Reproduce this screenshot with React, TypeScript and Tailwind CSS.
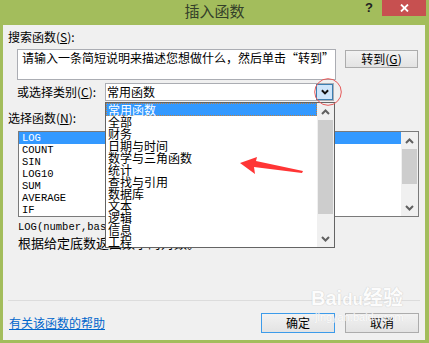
import React from "react";

const cjk = { fontFamily: '"Noto Sans CJK SC", "Noto Sans", sans-serif' };
const mono = { fontFamily: '"Liberation Mono", "DejaVu Sans Mono", monospace' };

function Chevron({ up, color = "#606060", w = 9, h = 6, sw = 2 }: { up?: boolean; color?: string; w?: number; h?: number; sw?: number }) {
  return (
    <svg width={w} height={h} viewBox="0 0 9 6">
      {up ? (
        <polyline points="1,5 4.5,1.5 8,5" fill="none" stroke={color} strokeWidth={sw} />
      ) : (
        <polyline points="1,1 4.5,4.5 8,1" fill="none" stroke={color} strokeWidth={sw} />
      )}
    </svg>
  );
}

const categories = [
  "常用函数",
  "全部",
  "财务",
  "日期与时间",
  "数学与三角函数",
  "统计",
  "查找与引用",
  "数据库",
  "文本",
  "逻辑",
  "信息",
  "工程",
];

const funcs = ["LOG", "COUNT", "SIN", "LOG10", "SUM", "AVERAGE", "IF"];

export default function App() {
  return (
    <div className="w-[429px] h-[343px] bg-[#a3bd5c] flex flex-col overflow-hidden text-black" style={cjk}>
      {/* title bar */}
      <div className="h-[25px] grid grid-cols-[1fr_auto_1fr] shrink-0">
        <div />
        <div className="text-[15px] leading-[22px] text-[#34402a]">插入函数</div>
        <div className="flex justify-end items-start">
          <span className="text-[13px] font-bold leading-[16px] mr-[9px] text-[#222]" style={{ fontFamily: '"Liberation Sans", sans-serif' }}>?</span>
          <div className="w-[44px] h-[16px] bg-[#c75050] mr-[3px] flex items-center justify-center">
            <svg width="9" height="8" viewBox="0 0 9 8">
              <path d="M1 0.5 L8 7.5 M8 0.5 L1 7.5" stroke="#fff" strokeWidth="1.8" fill="none" />
            </svg>
          </div>
        </div>
      </div>

      {/* body */}
      <div className="relative flex-1 ml-[3px] mr-[4px] mb-[3px] bg-[#f0f0f0] flex flex-col px-[5px]">
        <div className="mt-[4px] h-[16px] text-[12px] leading-[16px]">
          搜索函数(<span className="underline">S</span>):
        </div>

        <div className="mt-[4px] flex items-start ml-[9px]">
          <div className="w-[319px] h-[31px] bg-white border border-[#abadb3] pl-[4px] text-[12px] leading-[16px] whitespace-nowrap overflow-hidden">
            请输入一条简短说明来描述您想做什么，然后单击“转到”
          </div>
          <div className="ml-[9px] mt-[1px] w-[73px] h-[18px] border border-[#acacac] bg-gradient-to-b from-[#f2f2f2] to-[#e3e3e3] flex items-center justify-center text-[12px] leading-[16px]">
            转到(<span className="underline">G</span>)
          </div>
        </div>

        <div className="mt-[3px] flex items-center ml-[9px] h-[18px]">
          <div className="w-[88px] text-[12px] leading-[16px]">
            或选择类别(<span className="underline">C</span>):
          </div>
          <div className="w-[229px] h-[18px] bg-white border border-[#abadb3] flex items-center justify-between">
            <span className="pl-[1px] text-[12px] leading-[16px]">常用函数</span>
            <div className="w-[17px] h-[16px] bg-[#cfe6fb] border border-[#3c7fb1] flex items-center justify-center">
              <Chevron color="#111" w={8} h={6} sw={2.2} />
            </div>
          </div>
        </div>

        <div className="mt-[9px] h-[16px] text-[12px] leading-[16px]">
          选择函数(<span className="underline">N</span>):
        </div>

        <div className="mt-[5px] ml-[10px] w-[401px] h-[86px] bg-white border border-[#7a7a7a] flex">
          <div className="flex-1 flex flex-col">
            {funcs.map((f, i) => (
              <div
                key={f}
                className={`h-[12px] pl-[3px] text-[10.5px] leading-[12px] ${i === 0 ? "bg-[#3399ff] text-white" : "text-black"}`}
                style={mono}
              >
                {f}
              </div>
            ))}
          </div>
          <div className="w-[17px] bg-[#f0f0f0] flex flex-col">
            <div className="h-[17px] flex items-center justify-center">
              <Chevron up />
            </div>
            <div className="h-[35px] mx-[1px] bg-[#cdcdcd]" />
            <div className="flex-1" />
            <div className="h-[17px] flex items-center justify-center">
              <Chevron />
            </div>
          </div>
        </div>

        <div className="mt-[4px] ml-[10px] h-[12px] text-[10.5px] leading-[12px]" style={mono}>
          LOG(number,base)
        </div>
        <div className="mt-[2px] ml-[10px] h-[16px] text-[13px] leading-[16px]">根据给定底数返回数字的对数。</div>

        <div className="flex-1" />
        <div className="h-px bg-[#dcdcdc]" />

        <div className="mt-[12px] mb-[7px] h-[20px] flex items-center justify-between">
          <span className="ml-[1px] text-[12px] leading-[16px] text-[#0066cc] underline">有关该函数的帮助</span>
          <div className="flex gap-[10px] mr-[1px]">
            <div className="w-[74px] h-[20px] border border-[#3c9bea] bg-gradient-to-b from-[#f2f2f2] to-[#e3e3e3] flex items-center justify-center text-[12px] leading-[16px]">
              确定
            </div>
            <div className="w-[74px] h-[20px] border border-[#acacac] bg-gradient-to-b from-[#f2f2f2] to-[#e3e3e3] flex items-center justify-center text-[12px] leading-[16px]">
              取消
            </div>
          </div>
        </div>

        {/* watermark */}
        <div className="absolute left-[308px] top-[262px] pointer-events-none flex flex-col items-start opacity-80 whitespace-nowrap">
          <div
            className="text-[20px] font-bold leading-[22px] text-white whitespace-nowrap"
            style={{ fontFamily: '"Liberation Sans", "Noto Sans CJK SC", sans-serif', textShadow: "0 0 1px #c8c8c8, 0 0 1px #c8c8c8" }}
          >
            Bai<span className="text-[17px]">du</span>经验
          </div>
          <div className="ml-[4px] text-[11px] leading-[12px] text-white whitespace-nowrap" style={{ fontFamily: '"Liberation Sans", sans-serif', textShadow: "0 0 1px #d0d0d0" }}>
            jingyan.baidu.com
          </div>
        </div>

        {/* dropdown list overlay */}
        <div className="absolute left-[102px] top-[77px] w-[230px] h-[146px] bg-white border border-[#646464] flex">
          <div className="flex-1 flex flex-col">
            {categories.map((c, i) => (
              <div
                key={c}
                className={`h-[12px] text-[12px] leading-[12px] whitespace-nowrap ${
                  i === 0 ? "bg-[#3399ff] text-white border border-dotted border-[#c08040] pl-[1px] h-[13px] leading-[11px]" : "pl-[2px]"
                }`}
              >
                {c}
              </div>
            ))}
          </div>
          <div className="w-[17px] bg-[#f0f0f0] flex flex-col">
            <div className="h-[17px] flex items-center justify-center">
              <Chevron up />
            </div>
            <div className="h-[94px] mx-[1px] bg-[#cdcdcd]" />
            <div className="flex-1" />
            <div className="h-[17px] flex items-center justify-center">
              <Chevron />
            </div>
          </div>
        </div>

        {/* red circle */}
        <svg className="absolute left-[310px] top-[52px] pointer-events-none" width="30" height="30" viewBox="0 0 30 30">
          <circle cx="15" cy="15" r="13.3" fill="none" stroke="#e65a5a" strokeWidth="1" />
        </svg>

        {/* red arrow */}
        <svg className="absolute left-[235px] top-[130px] pointer-events-none" width="70" height="22" viewBox="0 0 70 22">
          <polygon points="2,8 19,2 18,6 65,16 64,18 16,12 17,19" fill="#ff3535" />
        </svg>
      </div>
    </div>
  );
}
